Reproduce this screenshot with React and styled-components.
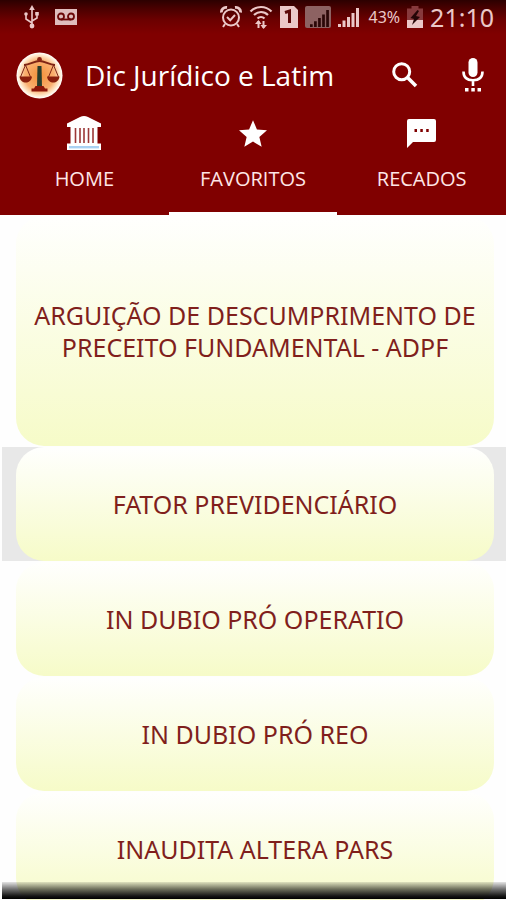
import React from "react";
import styled, { createGlobalStyle } from "styled-components";

const GlobalStyle = createGlobalStyle`
  * { box-sizing: border-box; }
  body { margin: 0; background: #fefefe; }
  button { font: inherit; color: inherit; background: none; border: 0; padding: 0; margin: 0; cursor: pointer; }
  svg { display: block; flex: none; }
`;

const Screen = styled.div`
  position: relative;
  display: flex;
  flex-direction: column;
  height: 100vh;
  overflow: hidden;
  font-family: "Noto Sans", "Open Sans", sans-serif;
`;

const Header = styled.header`
  flex: none;
  color: #fff;
  background: linear-gradient(#2c0000 0, #480000 8px, #6c0000 20px, #800000 34px);
`;

const StatusBar = styled.div`
  display: flex;
  align-items: center;
  justify-content: space-between;
  height: 34px;
  padding: 0 12px 0 23px;
  color: #ebc8c8;
`;

const StatusGroup = styled.div`
  display: flex;
  align-items: center;
  gap: ${(p) => p.$gap}px;
`;

const Battery = styled.span`
  font-size: 16px;
  margin-left: 2px;
`;

const Clock = styled.time`
  font-size: 25px;
  line-height: 34px;
`;

const Toolbar = styled.div`
  display: flex;
  align-items: center;
  height: 82px;
  padding: 0 22px 0 16px;
`;

const Title = styled.h1`
  flex: 1;
  margin: 0 0 0 22px;
  font-family: "Open Sans", "Noto Sans", sans-serif;
  font-size: 28px;
  line-height: 40px;
  font-weight: 400;
  white-space: nowrap;
`;

const Actions = styled.div`
  display: flex;
  align-items: center;
  gap: 44px;
`;

const Tabs = styled.nav`
  display: grid;
  grid-template-columns: repeat(3, 1fr);
`;

const Tab = styled.button`
  display: flex;
  flex-direction: column;
  align-items: center;
  gap: 14px;
  height: 99px;
  border-bottom: 3px solid ${(p) => (p.$active ? "#fff" : "transparent")};
  font-family: "Open Sans", "Noto Sans", sans-serif;
  font-size: 20px;
  line-height: 30px;
  color: #ffe6e6;
`;

const TabIcon = styled.span`
  display: grid;
  place-items: center;
  height: 34px;
`;

const List = styled.ul`
  flex: 1;
  min-height: 0;
  margin: 0;
  padding: 1px 0 0 2px;
  list-style: none;
  overflow-y: auto;
  scrollbar-width: none;
`;

const Row = styled.li`
  padding: 0 12px 0 14px;
  margin-bottom: 1px;
  background: ${(p) => (p.$pressed ? "#e8e8e8" : "transparent")};
`;

const Card = styled.button`
  display: block;
  width: 100%;
  min-height: 114px;
  padding: ${(p) => (p.$tall ? 83 : 40)}px 12px;
  border-radius: 28px;
  background: linear-gradient(#fffffe, #f6fbc8);
  font-size: 25px;
  line-height: 32px;
  font-weight: 400;
  color: #801f1c;
  text-align: center;
`;

const BottomShade = styled.div`
  position: absolute;
  left: 2px;
  right: 0;
  bottom: 1px;
  height: 17px;
  background: linear-gradient(rgba(0, 0, 0, 0.1), rgba(0, 0, 0, 0.55) 7px, #161616 14px, #000);
  pointer-events: none;
`;

const UsbIcon = () => (
  <svg width="17" height="24" viewBox="0 0 17 24" fill="none" stroke="currentColor" strokeWidth="1.6">
    <path d="M9 4v17M9 18 3 14V9M9 16l5-3V9" />
    <path d="M9 0 6.2 5h5.6z" fill="currentColor" stroke="none" />
    <circle cx="9" cy="21" r="2.4" fill="currentColor" stroke="none" />
    <circle cx="3" cy="9" r="1.8" fill="currentColor" stroke="none" />
    <path d="M12.2 7h3.6v3.6h-3.6z" fill="currentColor" stroke="none" />
  </svg>
);

const VoicemailIcon = () => (
  <svg width="22" height="16" viewBox="0 0 22 16">
    <path d="M0 0h22v16H0z" fill="#dfbdbd" />
    <g fill="none" stroke="#6b0808" strokeWidth="1.8">
      <circle cx="6" cy="7.5" r="3" />
      <circle cx="16" cy="7.5" r="3" />
      <path d="M6 10.5h10" />
    </g>
  </svg>
);

const AlarmIcon = () => (
  <svg width="22" height="24" viewBox="0 0 22 24" fill="none" stroke="currentColor" strokeWidth="2">
    <circle cx="11" cy="12.5" r="8" />
    <path d="m7 12 3.2 3.2L15 10M5 19l-2 3M17 19l2 3" />
    <path d="M1.5 7.5C1 4.500 3.500 2 7 2.500M20.500 7.500C21 4.500 18.500 2 15 2.500" strokeWidth="2.800" />
  </svg>
);

const WifiIcon = () => (
  <svg width="24" height="24" viewBox="0 0 24 24" fill="none" stroke="currentColor" strokeWidth="2.2">
    <path d="M1.500 6.500c6-6 15-6 21 0M5 10c4-4 10-4 14 0M8.500 13.500c2-2 5-2 7 0" />
    <path d="M9.500 16v7M14.500 16v7" strokeWidth="2" />
    <path d="m6 19 3.500-4 3 4zM11.500 20h6.500l-3.500 4z" fill="currentColor" stroke="none" />
  </svg>
);

const SimIcon = () => (
  <svg width="18" height="22" viewBox="0 0 18 22">
    <path d="M0 0h14l4 4v18H0z" fill="#ebc8c8" />
    <path d="M5 6.500 9.500 5v12" fill="none" stroke="#5c0808" strokeWidth="3" />
  </svg>
);

const SignalBars = ({ color }) => (
  <g fill={color}>
    <path d="M0 17h3v3H0zM4.500 13.500h3V20h-3zM9 10h3v10H9zM13.500 6h3v14h-3zM18 1h3v19h-3z" />
  </g>
);

const SignalOneIcon = () => (
  <svg width="26" height="22" viewBox="0 0 26 22">
    <rect width="26" height="22" rx="2" fill="#8d6262" />
    <g transform="translate(5 3) scale(.9)"><SignalBars color="#2b0707" /></g>
  </svg>
);

const SignalTwoIcon = () => (
  <svg width="21" height="20" viewBox="0 0 21 20"><SignalBars color="#ebc8c8" /></svg>
);

const BatteryIcon = () => (
  <svg width="16" height="22" viewBox="0 0 16 22">
    <path d="M4.500 0h7v2.500H16V22H0V2.500h4.500z" fill="#87393c" />
    <path d="M0 14h16v8H0z" fill="#ebc8c8" />
    <path d="m10.500 4-7 8 3.500 1-2 6 8-8-4-1 3-5z" fill="#250506" />
  </svg>
);

const ScalesLogo = () => (
  <svg width="47" height="47" viewBox="0 0 47 47">
    <defs>
      <radialGradient id="seal">
        <stop offset="0" stopColor="#f58f38" />
        <stop offset=".65" stopColor="#fab070" />
        <stop offset=".88" stopColor="#ffe9cc" />
        <stop offset="1" stopColor="#fff" />
      </radialGradient>
    </defs>
    <circle cx="23.500" cy="23.500" r="23" fill="url(#seal)" />
    <g fill="none" stroke="#7f2515" strokeWidth="1.500">
      <path d="M8 13c6 0 10-4 15.500-4s9.500 4 15.500 4" strokeWidth="2" />
      <path d="M9.500 13 4.500 25M9.500 13l5 12M37.500 13l-5 12M37.500 13l5 12" strokeWidth="1" />
    </g>
    <path d="M3.500 24.500h12.500c-1 8-11.500 8-12.500 0zM31 24.500h12.500c-1 8-11.500 8-12.500 0z" fill="#8b1f0c" />
    <circle cx="23.500" cy="7.500" r="2.400" fill="#8b2414" />
    <path d="M21.500 14h4l.5 21h-5z" fill="#283c2c" />
    <path d="M19.500 34h8l1.500 2.500h2.500v3h-16v-3H18z" fill="#8b1508" />
  </svg>
);

const SearchIcon = () => (
  <svg width="26" height="26" viewBox="0 0 26 26" fill="none" stroke="currentColor">
    <circle cx="9.700" cy="9.700" r="8" strokeWidth="3" />
    <path d="m15.500 15.500 8.500 8.500" strokeWidth="3.600" />
  </svg>
);

const MicIcon = () => (
  <svg width="22" height="36" viewBox="0 0 22 36" fill="none" stroke="currentColor" strokeWidth="2.600">
    <rect x="6.500" y="1" width="9" height="19" rx="4.500" fill="currentColor" stroke="none" />
    <path d="M1.500 14.500c0 6 4 8.700 9.500 8.700s9.500-2.700 9.500-8.700M11 23v6" />
    <path d="M3 31h3.500v3.500H3zM9.300 31h3.500v3.500H9.300zM15.500 31H19v3.500h-3.500z" fill="currentColor" stroke="none" />
  </svg>
);

const HomeIcon = () => (
  <svg width="34" height="34" viewBox="0 0 34 34" fill="#fff">
    <path d="M0 7.500 13 1q4-2 8 0l13 6.500V11H0z" />
    <path d="M3.500 10h27v18h-27z" />
    <path d="M8.500 12v15M13 12v15M17 12v15M21.500 12v15M26 12v15" stroke="#9c3838" strokeWidth="1.600" />
    <path d="M0 27.500h34V34H0z" />
    <path d="M2 31.200h30" stroke="#a8d1f3" strokeWidth="2.400" />
  </svg>
);

const StarIcon = () => (
  <svg width="28" height="27" viewBox="2 2 20 19" fill="#fff">
    <path d="M12 17.270 18.180 21l-1.640-7.030L22 9.240l-7.190-.61L12 2 9.190 8.630 2 9.240l5.460 4.730L5.820 21z" />
  </svg>
);

const MessageIcon = () => (
  <svg width="29" height="29" viewBox="0 0 29 29">
    <path d="M2 0h25q2 0 2 2v19q0 2-2 2H6l-6 6V2q0-2 2-2z" fill="#fff" />
    <path d="M7.500 10h2.500v3H7.500zM13.300 10h2.500v3h-2.500zM19.200 10h2.500v3h-2.500z" fill="#800000" />
  </svg>
);

const tabs = [
  { label: "HOME", Icon: HomeIcon },
  { label: "FAVORITOS", Icon: StarIcon, active: true },
  { label: "RECADOS", Icon: MessageIcon },
];

const entries = [
  { text: "ARGUIÇÃO DE DESCUMPRIMENTO DE PRECEITO FUNDAMENTAL - ADPF", tall: true },
  { text: "FATOR PREVIDENCIÁRIO", pressed: true },
  { text: "IN DUBIO PRÓ OPERATIO" },
  { text: "IN DUBIO PRÓ REO" },
  { text: "INAUDITA ALTERA PARS" },
];

export default function App() {
  return (
    <Screen>
      <GlobalStyle />
      <Header>
        <StatusBar>
          <StatusGroup $gap={15}>
            <UsbIcon />
            <VoicemailIcon />
          </StatusGroup>
          <StatusGroup $gap={7}>
            <AlarmIcon />
            <WifiIcon />
            <SimIcon />
            <SignalOneIcon />
            <SignalTwoIcon />
            <Battery>43%</Battery>
            <BatteryIcon />
            <Clock>21:10</Clock>
          </StatusGroup>
        </StatusBar>
        <Toolbar>
          <ScalesLogo />
          <Title>Dic Jurídico e Latim</Title>
          <Actions>
            <button type="button" aria-label="Buscar"><SearchIcon /></button>
            <button type="button" aria-label="Busca por voz"><MicIcon /></button>
          </Actions>
        </Toolbar>
        <Tabs>
          {tabs.map(({ label, Icon, active }) => (
            <Tab key={label} type="button" $active={active} aria-current={active ? "page" : undefined}>
              <TabIcon><Icon /></TabIcon>
              {label}
            </Tab>
          ))}
        </Tabs>
      </Header>
      <List>
        {entries.map(({ text, tall, pressed }) => (
          <Row key={text} $pressed={pressed}>
            <Card type="button" $tall={tall}>{text}</Card>
          </Row>
        ))}
      </List>
      <BottomShade />
    </Screen>
  );
}
